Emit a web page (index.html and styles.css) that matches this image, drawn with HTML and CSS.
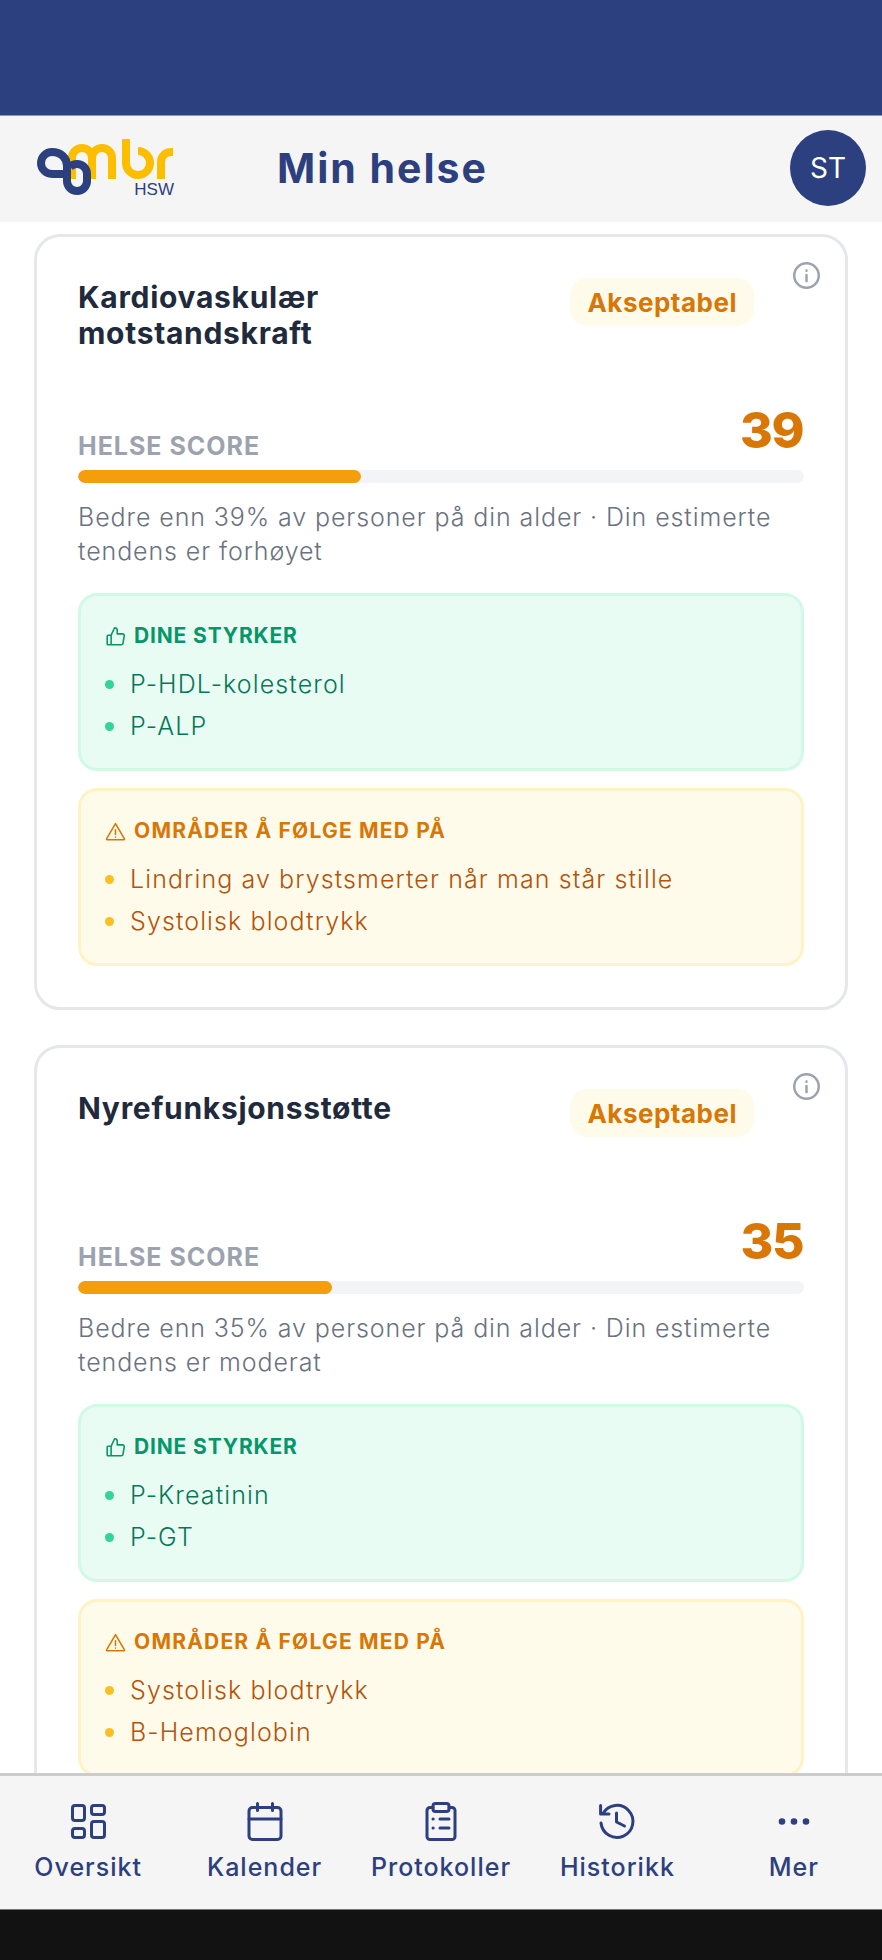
FILE: index.html
```html
<!DOCTYPE html>
<html lang="nb">
<head>
  <meta charset="UTF-8" />
  <meta name="viewport" content="width=device-width, initial-scale=1.0" />
  <title>Min helse</title>
  <link rel="stylesheet" href="styles.css">
</head>
<body>
  <div class="status-bar"></div>

  <header class="app-header">
    <div class="logo">
      <svg width="140" height="60" viewBox="0 0 140 60" fill="none" stroke-width="8">
        <!-- gule bokstaver -->
        <g stroke="#fdbe00">
          <path d="M36 41V20a10 10 0 0 1 20 0v21M56 20a10 10 0 0 1 20 0v21"/>
          <path d="M90 1v24a12 12 0 1 0 12-12"/>
          <path d="M125 41V24a10 10 0 0 1 10-10h2"/>
        </g>
        <!-- blaa sloyfe -->
        <path stroke="#2c4080" d="M27 36H16a11 11 0 0 1 0-22c9 0 15 6 15 14v15a10 10 0 0 0 20 0v-7a10 10 0 0 0-10-10c-3 0-5 1-7 3"/>
      </svg>
      <span class="logo-sub">HSW</span>
    </div>
    <h1>Min helse</h1>
    <div class="avatar">ST</div>
  </header>

  <main class="content">
    <section class="card">
      <svg class="info-icon" viewBox="0 0 24 24" fill="none" stroke="#9ca3af" stroke-width="2.2" stroke-linecap="round"><circle cx="12" cy="12" r="10.9"/><path d="M12 11.5v5.5M12 7.5v.2"/></svg>
      <div class="card-head">
        <h2>Kardiovaskulær motstandskraft</h2>
        <span class="badge">Akseptabel</span>
      </div>
      <div class="score-row">
        <span class="score-label">HELSE SCORE</span>
        <span class="score-value">39</span>
      </div>
      <div class="bar"><div class="bar-fill" style="width: 39%"></div></div>
      <p class="desc">Bedre enn 39% av personer på din alder · Din estimerte tendens er forhøyet</p>

      <div class="box box-good">
        <h3><svg viewBox="0 0 24 24" fill="none" stroke="currentColor" stroke-width="1.8" stroke-linejoin="round" stroke-linecap="round"><path d="M7 10.5v11M3.5 10.5H7l4-8.5a3 3 0 0 1 3 3v4h6a2 2 0 0 1 2 2.4l-1.4 8A2 2 0 0 1 18.6 21.5H3.5a1 1 0 0 1-1-1v-9a1 1 0 0 1 1-1z"/></svg>DINE STYRKER</h3>
        <ul>
          <li>P-HDL-kolesterol</li>
          <li>P-ALP</li>
        </ul>
      </div>

      <div class="box box-warn">
        <h3><svg viewBox="0 0 24 24" fill="none" stroke="currentColor" stroke-width="1.8" stroke-linejoin="round" stroke-linecap="round"><path d="M12 3 1.8 20.5a.6.6 0 0 0 .5.9h19.4a.6.6 0 0 0 .5-.9z"/><path d="M12 10v5.5M12 18.2v.2"/></svg>OMRÅDER Å FØLGE MED PÅ</h3>
        <ul>
          <li>Lindring av brystsmerter når man står stille</li>
          <li>Systolisk blodtrykk</li>
        </ul>
      </div>
    </section>

    <section class="card">
      <svg class="info-icon" viewBox="0 0 24 24" fill="none" stroke="#9ca3af" stroke-width="2.2" stroke-linecap="round"><circle cx="12" cy="12" r="10.9"/><path d="M12 11.5v5.5M12 7.5v.2"/></svg>
      <div class="card-head">
        <h2>Nyrefunksjonsstøtte</h2>
        <span class="badge">Akseptabel</span>
      </div>
      <div class="score-row">
        <span class="score-label">HELSE SCORE</span>
        <span class="score-value">35</span>
      </div>
      <div class="bar"><div class="bar-fill" style="width: 35%"></div></div>
      <p class="desc">Bedre enn 35% av personer på din alder · Din estimerte tendens er moderat</p>

      <div class="box box-good">
        <h3><svg viewBox="0 0 24 24" fill="none" stroke="currentColor" stroke-width="1.8" stroke-linejoin="round" stroke-linecap="round"><path d="M7 10.5v11M3.5 10.5H7l4-8.5a3 3 0 0 1 3 3v4h6a2 2 0 0 1 2 2.4l-1.4 8A2 2 0 0 1 18.6 21.5H3.5a1 1 0 0 1-1-1v-9a1 1 0 0 1 1-1z"/></svg>DINE STYRKER</h3>
        <ul>
          <li>P-Kreatinin</li>
          <li>P-GT</li>
        </ul>
      </div>

      <div class="box box-warn">
        <h3><svg viewBox="0 0 24 24" fill="none" stroke="currentColor" stroke-width="1.8" stroke-linejoin="round" stroke-linecap="round"><path d="M12 3 1.8 20.5a.6.6 0 0 0 .5.9h19.4a.6.6 0 0 0 .5-.9z"/><path d="M12 10v5.5M12 18.2v.2"/></svg>OMRÅDER Å FØLGE MED PÅ</h3>
        <ul>
          <li>Systolisk blodtrykk</li>
          <li>B-Hemoglobin</li>
        </ul>
      </div>
    </section>
  </main>

  <nav class="tabbar">
    <div class="tab">
      <svg viewBox="0 0 40 40" fill="none" stroke="currentColor" stroke-width="3" stroke-linejoin="round"><rect x="4.5" y="3.5" width="12" height="15" rx="2.5"/><rect x="23.5" y="3.5" width="13" height="9" rx="2.5"/><rect x="4.5" y="26.5" width="12" height="9" rx="2.5"/><rect x="23.5" y="19.5" width="13" height="16" rx="2.5"/></svg>
      <span>Oversikt</span>
    </div>
    <div class="tab">
      <svg viewBox="0 0 40 40" fill="none" stroke="currentColor" stroke-width="3" stroke-linecap="round" stroke-linejoin="round"><rect x="4" y="5.5" width="32" height="32" rx="3.5"/><path d="M4 17h32M12.5 1.5v7M27.5 1.5v7"/></svg>
      <span>Kalender</span>
    </div>
    <div class="tab">
      <svg viewBox="0 0 40 40" fill="none" stroke="currentColor" stroke-width="3" stroke-linecap="round" stroke-linejoin="round"><path d="M12 5.5H9a3 3 0 0 0-3 3v26a3 3 0 0 0 3 3h22a3 3 0 0 0 3-3v-26a3 3 0 0 0-3-3h-3"/><rect x="12" y="1.5" width="16" height="8" rx="2.5"/><path d="M19 17h9M19 26h9M12 17h.2M12 26h.2"/></svg>
      <span>Protokoller</span>
    </div>
    <div class="tab">
      <svg viewBox="0 0 40 40" fill="none" stroke="currentColor" stroke-width="3" stroke-linecap="round" stroke-linejoin="round"><path d="M3.6 3.5V12H12"/><path d="M6 11.5A16 16 0 1 1 4 21"/><path d="M19.5 11v9l8 4"/></svg>
      <span>Historikk</span>
    </div>
    <div class="tab">
      <svg viewBox="0 0 40 40" fill="currentColor"><circle cx="8" cy="19.5" r="3.3"/><circle cx="20" cy="19.5" r="3.3"/><circle cx="32" cy="19.5" r="3.3"/></svg>
      <span>Mer</span>
    </div>
  </nav>

  <div class="home-bar"></div>
</body>
</html>
```

FILE: styles.css
```css
body {
  font-family: Inter, "Open Sans", sans-serif;
  background: #fff;
  margin: 0;
  padding: 0;
  height: 1960px;
  display: flex;
  flex-direction: column;
  overflow: hidden;
}
.status-bar {
  height: 115px;
  flex: none;
  background: #2c4080;
}
.app-header {
  height: 107px;
  flex: none;
  display: flex;
  align-items: center;
  background: #f5f5f5;
  border-top: 1px solid #8b98bd;
  box-sizing: border-box;
  padding: 0 16px 0 36px;
}
.logo {
  position: relative;
  width: 140px;
  height: 60px;
  margin-bottom: 2px;
}
.logo svg {
  display: block;
}
.logo-sub {
  position: absolute;
  right: 2px;
  bottom: 0;
  font-size: 17px;
  line-height: 17px;
  color: #2c4080;
  font-family: "Liberation Sans", sans-serif;
}
.app-header h1 {
  margin: 0 0 3px 101px;
  flex: 1;
  font-size: 41px;
  letter-spacing: 2px;
  font-weight: 700;
  color: #2c4080;
}
.avatar {
  width: 76px;
  height: 76px;
  margin-bottom: 2px;
  border-radius: 50%;
  background: #2c4080;
  color: #fff;
  font-size: 28px;
  display: flex;
  align-items: center;
  justify-content: center;
}
.content {
  flex: 1;
  min-height: 0;
  overflow: hidden;
  padding: 12px 34px 0 34px;
  display: flex;
  flex-direction: column;
  gap: 35px;
}
.card {
  position: relative;
  flex: none;
  border: 3px solid #e5e7eb;
  border-radius: 26px;
  padding: 41px;
  background: #fff;
}
.info-icon {
  position: absolute;
  top: 25px;
  right: 25px;
  width: 27px;
  height: 27px;
}
.card-head {
  display: flex;
  justify-content: space-between;
  align-items: flex-start;
  height: 122px;
}
.card-head h2 {
  margin: 1px 0 0;
  width: 330px;
  font-size: 30px;
  line-height: 36px;
  letter-spacing: 0.7px;
  font-weight: 700;
  color: #1f2a3d;
}
.badge {
  margin-right: 50px;
  height: 48px;
  padding: 0 17px;
  display: flex;
  align-items: center;
  border-radius: 17px;
  background: #fffbeb;
  color: #d97706;
  font-size: 26px;
  letter-spacing: 0.5px;
  font-weight: 700;
}
.score-row {
  display: flex;
  justify-content: space-between;
  align-items: flex-end;
}
.score-label {
  font-size: 25px;
  letter-spacing: 1px;
  font-weight: 700;
  color: #9ca3af;
  margin-bottom: -1px;
}
.score-value {
  font-size: 50px;
  line-height: 60px;
  letter-spacing: -1.5px;
  padding-right: 1px;
  font-weight: 800;
  color: #d97706;
}
.bar {
  height: 13px;
  border-radius: 7px;
  background: #f3f4f6;
  margin-top: 10px;
  overflow: hidden;
}
.bar-fill {
  height: 100%;
  border-radius: 7px;
  background: #f59e0b;
}
.desc {
  margin: 17px 0 0;
  font-size: 25px;
  line-height: 34px;
  letter-spacing: 0.9px;
  font-weight: 350;
  color: #6b7280;
}
.box {
  margin-top: 25px;
  height: 178px;
  box-sizing: border-box;
  border: 3px solid;
  border-radius: 19px;
  padding: 27px 24px;
}
.box + .box {
  margin-top: 17px;
}
.box-good {
  background: #e9fcf3;
  border-color: #d1fae5;
  color: #059669;
}
.box-warn {
  background: #fffbeb;
  border-color: #fef3c7;
  color: #d97706;
}
.box h3 {
  margin: 0;
  display: flex;
  align-items: center;
  gap: 8px;
  font-size: 21px;
  line-height: 26px;
  letter-spacing: 0.85px;
  font-weight: 700;
}
.box-warn h3 {
  letter-spacing: 1.2px;
}
.box h3 svg {
  width: 21px;
  height: 21px;
  flex: none;
}
.box ul {
  list-style: none;
  margin: 14px 0 0;
  padding: 0;
}
.box li {
  display: flex;
  align-items: center;
  gap: 16px;
  height: 42px;
  font-size: 25px;
  letter-spacing: 1.1px;
  font-weight: 350;
}
.box li::before {
  content: "";
  width: 9px;
  height: 9px;
  border-radius: 50%;
}
.box-good li {
  color: #047857;
}
.box-good li::before {
  background: #34d399;
}
.box-warn li {
  color: #b45309;
}
.box-warn li::before {
  background: #fbbf24;
}
.tabbar {
  height: 136px;
  flex: none;
  display: grid;
  grid-template-columns: repeat(5, 1fr);
  background: #f5f5f5;
  border-top: 3px solid #ccc;
  box-sizing: border-box;
  color: #2c4080;
}
.tab {
  display: flex;
  flex-direction: column;
  align-items: center;
  padding-top: 26px;
  font-size: 25px;
  letter-spacing: 1px;
  font-weight: 450;
}
.tab svg {
  width: 40px;
  height: 40px;
  margin-bottom: 10px;
}
.home-bar {
  height: 51px;
  flex: none;
  background: #121212;
  border-top: 1px solid #777;
  box-sizing: border-box;
}
```
